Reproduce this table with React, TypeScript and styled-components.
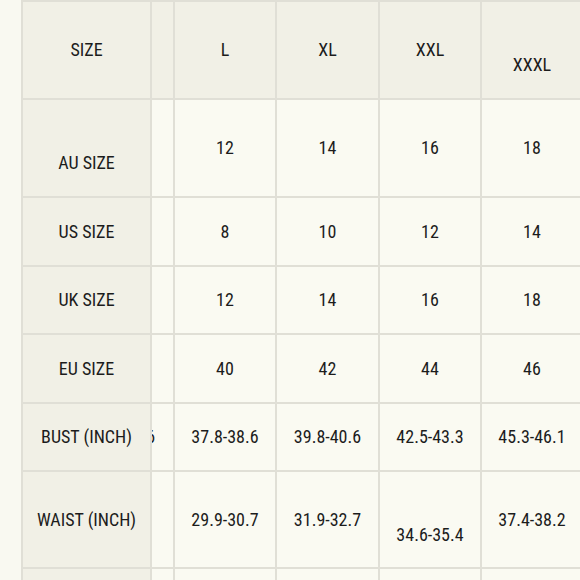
import React from "react";
import styled, { createGlobalStyle } from "styled-components";

const Global = createGlobalStyle`
  html, body {
    margin: 0;
    padding: 0;
    overflow: hidden;
    background: #f9f9f1;
  }
  body {
    font-family: "Roboto Condensed", "Open Sans", "Liberation Sans Narrow", sans-serif;
    font-stretch: 75%;
    color: #1c1c1c;
  }
`;

const Page = styled.div`
  width: 580px;
  height: 580px;
  overflow: hidden;
  padding-left: 21px;
  box-sizing: border-box;
`;

const Table = styled.div`
  display: grid;
  grid-template-columns: 127px 21px 100px 101px 100px 100px;
  gap: 2px;
  padding: 2px;
  background: #e0dfd6;
  width: max-content;
`;

const Row = styled.div<{ $h: number }>`
  display: contents;
  & > * {
    height: ${(p) => p.$h}px;
  }
`;

const Cell = styled.div<{ $head?: boolean; $drop?: boolean }>`
  display: flex;
  align-items: center;
  justify-content: center;
  box-sizing: border-box;
  padding-top: ${(p) => (p.$drop ? 30 : 0)}px;
  background: ${(p) => (p.$head ? "#f1f0e6" : "#fafaf2")};
  font-size: 18px;
  line-height: 1;
  white-space: nowrap;
  overflow: hidden;
`;

const LabelCell = styled(Cell)`
  background: #f1f0e6;
`;

const HiddenCell = styled(Cell)`
  justify-content: flex-end;
`;

const HiddenInner = styled.div`
  flex: none;
  width: 103px;
  text-align: center;
`;

type R = { label: string; m: string; vals: string[]; h: number; dropLabel?: boolean; drops?: boolean[] };

const rows: R[] = [
  { label: "AU SIZE", m: "10", vals: ["12", "14", "16", "18"], h: 96, dropLabel: true },
  { label: "US SIZE", m: "6", vals: ["8", "10", "12", "14"], h: 67 },
  { label: "UK SIZE", m: "10", vals: ["12", "14", "16", "18"], h: 66 },
  { label: "EU SIZE", m: "38", vals: ["40", "42", "44", "46"], h: 67 },
  { label: "BUST (INCH)", m: "35.8-36.6", vals: ["37.8-38.6", "39.8-40.6", "42.5-43.3", "45.3-46.1"], h: 66 },
  { label: "WAIST (INCH)", m: "", vals: ["29.9-30.7", "31.9-32.7", "34.6-35.4", "37.4-38.2"], h: 95, drops: [false, false, true, false] },
  { label: "HIP (INCH)", m: "", vals: ["39.4-40.2", "41.3-42.1", "43.3-44.1", "45.7-46.5"], h: 96 },
];

export default function App() {
  const heads = ["L", "XL", "XXL", "XXXL"];
  return (
    <>
      <Global />
      <Page>
        <Table>
          <Row $h={96}>
            <LabelCell $head>SIZE</LabelCell>
            <HiddenCell $head>
              <HiddenInner />
            </HiddenCell>
            {heads.map((h, i) => (
              <Cell key={h} $head $drop={i === 3}>
                {h}
              </Cell>
            ))}
          </Row>
          {rows.map((r) => (
            <Row key={r.label} $h={r.h}>
              <LabelCell $drop={r.dropLabel}>{r.label}</LabelCell>
              <HiddenCell>
                <HiddenInner>{r.m}</HiddenInner>
              </HiddenCell>
              {r.vals.map((v, i) => (
                <Cell key={i} $drop={r.drops?.[i]}>
                  {v}
                </Cell>
              ))}
            </Row>
          ))}
        </Table>
      </Page>
    </>
  );
}
